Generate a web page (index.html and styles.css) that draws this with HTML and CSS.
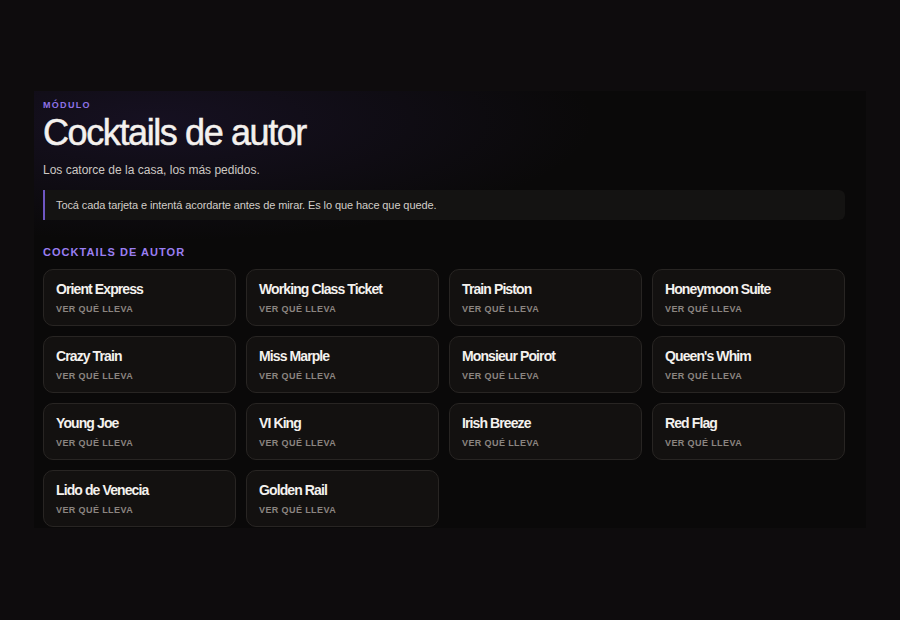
FILE: index.html
```html
<!DOCTYPE html>
<html lang="es">
<head>
<meta charset="utf-8">
<link rel="stylesheet" href="styles.css">
</head>
<body>
<section class="module">
  <div class="eyebrow">MÓDULO</div>
  <h1 class="title">Cocktails de autor</h1>
  <p class="lead">Los catorce de la casa, los más pedidos.</p>
  <div class="note">Tocá cada tarjeta e intentá acordarte antes de mirar. Es lo que hace que quede.</div>
  <h2 class="section-title">COCKTAILS DE AUTOR</h2>
  <div class="grid">
    <div class="card"><div class="card-name">Orient Express</div><div class="card-hint">VER QUÉ LLEVA</div></div>
    <div class="card"><div class="card-name">Working Class Ticket</div><div class="card-hint">VER QUÉ LLEVA</div></div>
    <div class="card"><div class="card-name">Train Piston</div><div class="card-hint">VER QUÉ LLEVA</div></div>
    <div class="card"><div class="card-name">Honeymoon Suite</div><div class="card-hint">VER QUÉ LLEVA</div></div>
    <div class="card"><div class="card-name">Crazy Train</div><div class="card-hint">VER QUÉ LLEVA</div></div>
    <div class="card"><div class="card-name">Miss Marple</div><div class="card-hint">VER QUÉ LLEVA</div></div>
    <div class="card"><div class="card-name">Monsieur Poirot</div><div class="card-hint">VER QUÉ LLEVA</div></div>
    <div class="card"><div class="card-name">Queen's Whim</div><div class="card-hint">VER QUÉ LLEVA</div></div>
    <div class="card"><div class="card-name">Young Joe</div><div class="card-hint">VER QUÉ LLEVA</div></div>
    <div class="card"><div class="card-name">VI King</div><div class="card-hint">VER QUÉ LLEVA</div></div>
    <div class="card"><div class="card-name">Irish Breeze</div><div class="card-hint">VER QUÉ LLEVA</div></div>
    <div class="card"><div class="card-name">Red Flag</div><div class="card-hint">VER QUÉ LLEVA</div></div>
    <div class="card"><div class="card-name">Lido de Venecia</div><div class="card-hint">VER QUÉ LLEVA</div></div>
    <div class="card"><div class="card-name">Golden Rail</div><div class="card-hint">VER QUÉ LLEVA</div></div>
  </div>
</section>
</body>
</html>
```
FILE: styles.css
```css
html, body {
  margin: 0;
  padding: 0;
  background: #0e0c0d;
  font-family: "Liberation Sans", Arial, sans-serif;
  color: #f2efec;
}
body {
  padding: 91px 34px 0 34px;
  height: 620px;
  box-sizing: border-box;
}
.module {
  width: 832px;
  box-sizing: border-box;
  padding: 9px 21px 1px 9px;
  background:
    radial-gradient(ellipse 440px 120px at 120px 30px, rgba(60, 40, 110, 0.24), rgba(60, 40, 110, 0) 100%),
    #0a0909;
}
.eyebrow {
  font-size: 9px;
  font-weight: 700;
  letter-spacing: 1.3px;
  color: #8e72e6;
  line-height: 10px;
}
.title {
  margin: 3px 0 0 0;
  font-size: 36px;
  font-weight: 400;
  letter-spacing: -1.4px;
  line-height: 40px;
  color: #f4f1ee;
  -webkit-text-stroke: 0.5px #f4f1ee;
}
.lead {
  margin: 9px 0 0 0;
  font-size: 12px;
  line-height: 16px;
  color: #cdc8c3;
}
.note {
  margin-top: 12px;
  height: 30px;
  box-sizing: border-box;
  padding: 0 11px;
  display: flex;
  align-items: center;
  font-size: 11px;
  letter-spacing: -0.1px;
  color: #d2cdc8;
  background: #141312;
  border-left: 2px solid #6e56c2;
  border-radius: 0 6px 6px 0;
}
.section-title {
  margin: 26px 0 0 0;
  font-size: 11px;
  font-weight: 700;
  letter-spacing: 1.05px;
  line-height: 13px;
  color: #9a7ef2;
}
.grid {
  margin-top: 10px;
  display: grid;
  grid-template-columns: repeat(4, 193px);
  grid-auto-rows: 57px;
  gap: 10px;
}
.card {
  box-sizing: border-box;
  background: #131110;
  border: 1px solid #282523;
  border-radius: 10px;
  padding: 11px 12px;
}
.card-name {
  font-size: 14px;
  font-weight: 700;
  letter-spacing: -0.9px;
  line-height: 17px;
  color: #f4f1ee;
}
.card-hint {
  margin-top: 6px;
  font-size: 9px;
  font-weight: 700;
  letter-spacing: 0.4px;
  line-height: 11px;
  color: #8b8580;
}
```
